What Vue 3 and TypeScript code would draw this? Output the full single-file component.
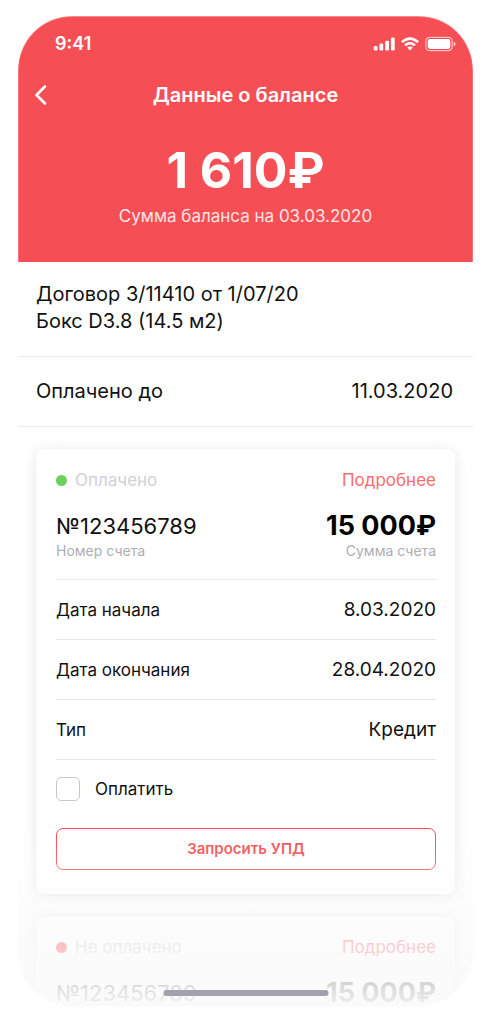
<script setup lang="ts">
import { ref } from 'vue'

interface Row {
  label: string
  value: string
}

interface Invoice {
  id: number
  paid: boolean
  status: string
  number: string
  sum: string
  rows?: Row[]
}

const invoices: Invoice[] = [
  {
    id: 1,
    paid: true,
    status: 'Оплачено',
    number: '№123456789',
    sum: '15 000₽',
    rows: [
      { label: 'Дата начала', value: '8.03.2020' },
      { label: 'Дата окончания', value: '28.04.2020' },
      { label: 'Тип', value: 'Кредит' },
    ],
  },
  { id: 2, paid: false, status: 'Не оплачено', number: '№123456789', sum: '15 000₽' },
]

const selected = ref<number[]>([])
</script>

<template>
  <div class="page">
    <main class="phone">
      <header class="hero">
        <div class="status-bar">
          <span class="time">9:41</span>
          <svg class="indicators" width="84" height="16" viewBox="0 0 84 16" fill="#fff" aria-hidden="true">
            <rect x="0.7" y="10" width="3.8" height="4.6" rx="1.3" />
            <rect x="6.4" y="7.6" width="3.8" height="7" rx="1.3" />
            <rect x="12.2" y="4.7" width="3.8" height="9.9" rx="1.3" />
            <rect x="17.9" y="1.6" width="3.8" height="13" rx="1.3" />
            <path d="M28 5.3 Q37 -2.6 46 5.3 L44.2 7.1 Q37 1.1 29.8 7.1Z" />
            <path d="M31.2 8.4 Q37 3.6 42.8 8.4 L41 10.2 Q37 6.9 33 10.2Z" />
            <path d="M34.2 11.6 Q37 9.4 39.8 11.6 L37 14.4Z" />
            <rect x="52.8" y="1.3" width="26.4" height="13.4" rx="4" fill="none" stroke="#fff" stroke-opacity=".65" stroke-width="1.2" />
            <rect x="54.7" y="3.1" width="22.6" height="9.8" rx="2.4" />
            <path d="M80.7 5.8 Q82.6 6.4 82.6 8 T80.7 10.2Z" opacity=".7" />
          </svg>
        </div>
        <nav class="title-bar">
          <button class="back" type="button" aria-label="Назад">
            <svg width="14" height="22" viewBox="0 0 14 22" fill="none" stroke="#fff" stroke-width="2.6" stroke-linecap="round" stroke-linejoin="round">
              <path d="M11 2.5 L2.5 11 L11 19.5" />
            </svg>
          </button>
          <h1>Данные о балансе</h1>
        </nav>
        <p class="balance">1 610₽</p>
        <p class="balance-note">Сумма баланса на 03.03.2020</p>
      </header>

      <section class="contract">
        <p>Договор 3/11410 от 1/07/20</p>
        <p>Бокс D3.8 (14.5 м2)</p>
      </section>
      <section class="paid-until">
        <span>Оплачено до</span>
        <span>11.03.2020</span>
      </section>

      <section class="invoices">
        <article v-for="invoice in invoices" :key="invoice.id" class="card">
          <div class="card-top">
            <span class="state" :class="{ unpaid: !invoice.paid }">{{ invoice.status }}</span>
            <a class="more" href="#">Подробнее</a>
          </div>
          <div class="summary">
            <div class="account">
              <strong>{{ invoice.number }}</strong>
              <small v-if="invoice.rows">Номер счета</small>
            </div>
            <div class="total">
              <strong>{{ invoice.sum }}</strong>
              <small v-if="invoice.rows">Сумма счета</small>
            </div>
          </div>
          <template v-if="invoice.rows">
            <dl>
              <div v-for="row in invoice.rows" :key="row.label" class="row">
                <dt>{{ row.label }}</dt>
                <dd>{{ row.value }}</dd>
              </div>
            </dl>
            <label class="pay">
              <input v-model="selected" type="checkbox" :value="invoice.id" />
              <span>Оплатить</span>
            </label>
            <button class="request" type="button">Запросить УПД</button>
          </template>
        </article>
      </section>

      <div class="fade"></div>
      <div class="home-indicator"></div>
    </main>
  </div>
</template>

<style>
body {
  margin: 0;
  background: #fff;
}
</style>

<style scoped>
.page {
  box-sizing: border-box;
  height: 100vh;
  padding: 16px 15px 16px 18px;
  font-family: Inter, Roboto, sans-serif;
  color: #111;
}
.phone {
  position: relative;
  height: 100%;
  overflow: hidden;
  border-radius: 54px;
  background: #fff;
}
p, h1, dl, dd {
  margin: 0;
}
.hero {
  height: 246px;
  border-radius: 54px 54px 0 0;
  background: #f54f55;
  box-shadow: inset 0 1px 0 rgba(255, 255, 255, .35), inset 1px 0 0 rgba(255, 255, 255, .2), inset -1px 0 0 rgba(255, 255, 255, .2);
  color: #fff;
  text-align: center;
}
.status-bar {
  display: flex;
  align-items: center;
  justify-content: space-between;
  padding: 18px 16px 0 37px;
}
.time {
  font-size: 18px;
  line-height: 20px;
  font-weight: 600;
}
.title-bar {
  display: grid;
  grid-template-columns: 32px 1fr 32px;
  align-items: center;
  padding: 29px 14px 0;
}
.back {
  display: flex;
  padding: 0 2px;
  border: 0;
  background: none;
}
h1 {
  font-size: 20px;
  line-height: 24px;
  font-weight: 600;
}
.balance {
  margin-top: 35px;
  font-size: 50px;
  line-height: 56px;
  font-weight: 700;
}
.balance-note {
  margin-top: 8px;
  font-size: 17px;
  line-height: 20px;
  opacity: .85;
}
.contract,
.paid-until {
  padding: 20px 20px 20px 18px;
  border-bottom: 1px solid #e8e8ee;
  font-size: 20px;
  line-height: 27px;
}
.contract {
  padding-top: 19px;
  padding-bottom: 21px;
}
.paid-until {
  display: flex;
  justify-content: space-between;
  padding-top: 21px;
  padding-bottom: 21px;
}
.invoices {
  display: grid;
  gap: 22px;
  padding: 22px 18px;
}
.card {
  padding: 20px 19px 24px 20px;
  border-radius: 8px;
  background: #fff;
  box-shadow: 0 2px 14px rgba(0, 0, 0, .1);
}
.card-top,
.summary,
.row {
  display: flex;
  align-items: center;
  justify-content: space-between;
}
.card-top {
  font-size: 17px;
  line-height: 22px;
}
.state {
  display: flex;
  align-items: center;
  gap: 8px;
  color: #d1d1d6;
}
.state::before {
  content: "";
  width: 11px;
  height: 11px;
  border-radius: 50%;
  background: #6bd15c;
}
.state.unpaid::before {
  background: #f54f55;
}
.more {
  color: #f86c70;
  text-decoration: none;
}
.summary {
  padding: 20px 0 18px;
  border-bottom: 1px solid #e8e8ee;
}
.account,
.total {
  display: grid;
}
.account strong {
  font-size: 22px;
  line-height: 30px;
  font-weight: 400;
}
.total {
  text-align: right;
}
.total strong {
  font-size: 27px;
  line-height: 30px;
  font-weight: 700;
  color: #000;
}
small {
  font-size: 14px;
  line-height: 20px;
  color: #aeaeb4;
}
.row {
  height: 59px;
  border-bottom: 1px solid #e6e6e6;
}
dt,
.pay {
  font-size: 17px;
  line-height: 24px;
}
dd {
  font-size: 19px;
  line-height: 24px;
}
.pay {
  display: flex;
  align-items: center;
  gap: 15px;
  margin-top: 17px;
}
.pay input {
  appearance: none;
  box-sizing: border-box;
  width: 24px;
  height: 24px;
  margin: 0;
  border: 1px solid #c7c7cc;
  border-radius: 5px;
  background: #fff;
}
.pay input:checked {
  background: #f54f55;
}
.request {
  width: 100%;
  height: 42px;
  margin-top: 27px;
  padding: 0 0 2px;
  border: 1px solid #f54f55;
  border-radius: 7px;
  background: none;
  color: #f54f55;
  font-family: inherit;
  font-size: 15px;
  font-weight: 600;
}
.fade {
  position: absolute;
  inset: auto 0 0;
  height: 172px;
  background: linear-gradient(rgba(250, 250, 250, 0), rgba(250, 250, 250, .64) 60%, rgba(250, 250, 250, .96));
  pointer-events: none;
}
.home-indicator {
  position: absolute;
  bottom: 10px;
  left: 50%;
  width: 165px;
  height: 6px;
  border-radius: 3px;
  background: #a2a2ad;
  transform: translateX(-50%);
}
</style>
